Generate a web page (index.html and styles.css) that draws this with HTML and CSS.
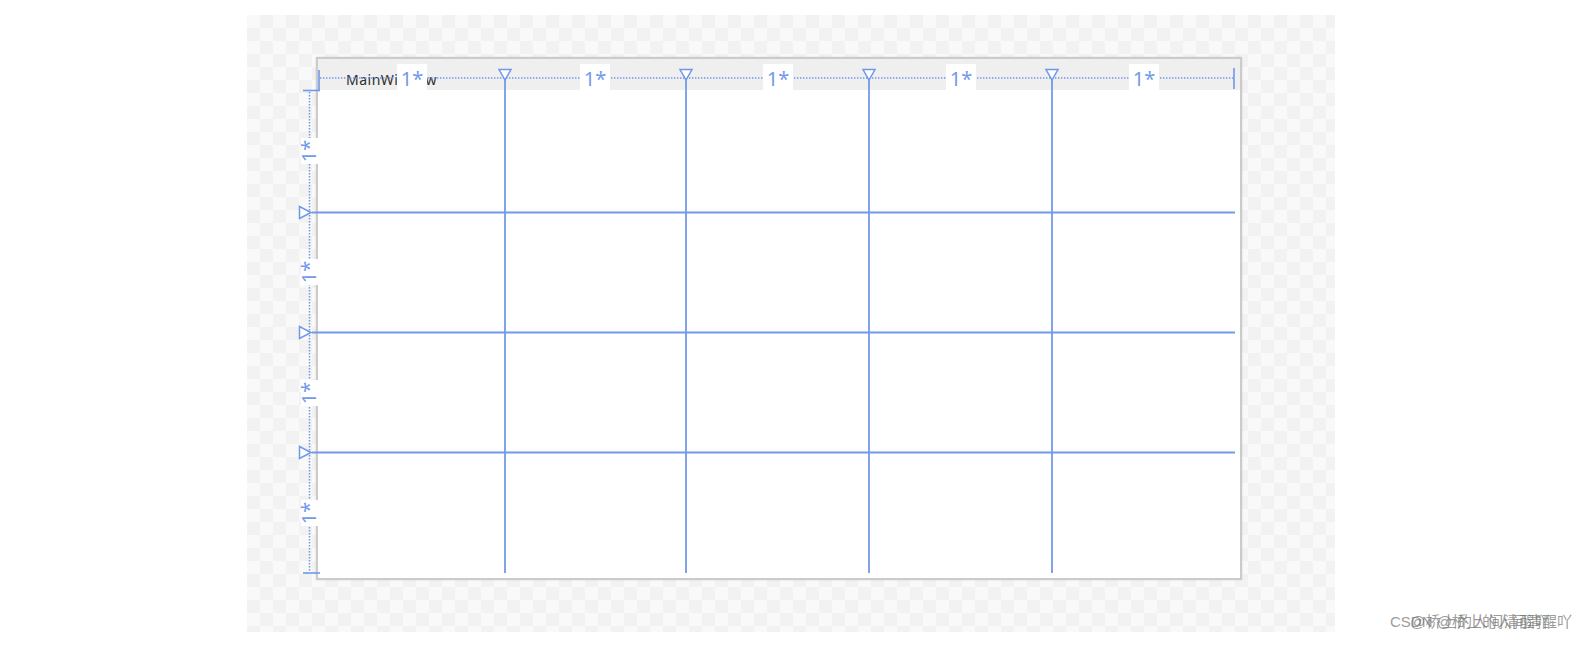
FILE: index.html
```html
<!DOCTYPE html>
<html>
<head>
<meta charset="utf-8">
<title>MainWindow 设计器</title>
<link rel="stylesheet" href="styles.css">
</head>
<body>
<div class="page">
	<div class="canvas">
		<div class="window">
			<div class="titlebar"><span class="title">MainWindow</span></div>
			<div class="client"></div>
		</div>
	</div>

	<!-- grid adorners drawn over the design surface -->
	<svg class="adorners" width="1578" height="648" viewBox="0 0 1578 648">
		<g class="dots">
			<line x1="320" y1="78" x2="1233" y2="78"/>
			<line x1="309.5" y1="92" x2="309.5" y2="572"/>
		</g>
		<g class="ticks">
			<line x1="319" y1="70" x2="319" y2="91"/>
			<line x1="303" y1="90.5" x2="320" y2="90.5"/>
			<line x1="1234" y1="68" x2="1234" y2="89"/>
			<line x1="303" y1="573" x2="320" y2="573"/>
		</g>
		<g class="lines">
			<line x1="505" y1="80" x2="505" y2="573"/>
			<line x1="686" y1="80" x2="686" y2="573"/>
			<line x1="869" y1="80" x2="869" y2="573"/>
			<line x1="1052" y1="80" x2="1052" y2="573"/>
			<line x1="312" y1="212.5" x2="1235" y2="212.5"/>
			<line x1="312" y1="332.5" x2="1235" y2="332.5"/>
			<line x1="312" y1="452.5" x2="1235" y2="452.5"/>
		</g>
		<g class="marks">
			<polygon points="499,69.5 511,69.5 505,80"/>
			<polygon points="680,69.5 692,69.5 686,80"/>
			<polygon points="863,69.5 875,69.5 869,80"/>
			<polygon points="1046,69.5 1058,69.5 1052,80"/>
			<polygon points="299.5,206.5 299.5,218.5 311,212.5"/>
			<polygon points="299.5,326.5 299.5,338.5 311,332.5"/>
			<polygon points="299.5,446.5 299.5,458.5 311,452.5"/>
		</g>
		<g class="labels">
			<rect x="397" y="64" width="30" height="26"/>
			<text x="412" y="86">1*</text>
			<rect x="580" y="64" width="30" height="26"/>
			<text x="595" y="86">1*</text>
			<rect x="763" y="64" width="30" height="26"/>
			<text x="778" y="86">1*</text>
			<rect x="946" y="64" width="30" height="26"/>
			<text x="961" y="86">1*</text>
			<rect x="1129" y="64" width="30" height="26"/>
			<text x="1144" y="86">1*</text>

			<rect x="301" y="138" width="19" height="26"/>
			<text transform="translate(316 151) rotate(-90)">1*</text>
			<rect x="301" y="259" width="19" height="26"/>
			<text transform="translate(316 272) rotate(-90)">1*</text>
			<rect x="301" y="380" width="19" height="26"/>
			<text transform="translate(316 393) rotate(-90)">1*</text>
			<rect x="301" y="500" width="19" height="26"/>
			<text transform="translate(316 513) rotate(-90)">1*</text>
		</g>
	</svg>

	<div class="watermark">
		<span class="wm-a">CSDN @桥上的人间清醒吖</span>
		<span class="wm-b">@桥上的人间清醒吖</span>
	</div>
</div>
</body>
</html>
```

FILE: styles.css
```css
* { margin: 0; padding: 0; box-sizing: border-box; }

body {
	background: #fff;
	font-family: "Noto Sans", "Liberation Sans", sans-serif;
}

.page {
	position: relative;
	width: 1578px;
	height: 648px;
	padding: 15px 0 0 247px;
}

.canvas {
	width: 1088px;
	height: 617px;
	padding: 42px 0 0 69px;
	background-color: #f9f9f9;
	background-image: conic-gradient(#f2f2f2 25%, transparent 0 50%, #f2f2f2 0 75%, transparent 0);
	background-size: 26px 26px;
}

.window {
	display: flex;
	flex-direction: column;
	width: 926px;
	height: 523px;
	border: 2px solid #cbcbcb;
	box-shadow: 0 0 2px rgba(0, 0, 0, 0.12);
	background: #fff;
}

.titlebar {
	height: 31px;
	padding: 9px 0 0 28px;
	background: #efefef;
}

.title {
	font-size: 14px;
	line-height: 14px;
	color: #2e2e2e;
	letter-spacing: 0.5px;
}

.client {
	flex: 1;
	background: #fff;
}

.adorners {
	position: absolute;
	top: 0;
	left: 0;
	pointer-events: none;
}

.dots line {
	stroke: #6f97ea;
	stroke-width: 1.5;
	stroke-dasharray: 1.4 1.6;
}

.ticks line {
	stroke: #6f97ea;
	stroke-width: 1.6;
}

.lines line {
	stroke: #7399ea;
	stroke-width: 1.8;
}

.marks polygon {
	fill: #fff;
	stroke: #6f97ea;
	stroke-width: 1.5;
}

.labels rect {
	fill: #fff;
}

.labels text {
	font-family: "Noto Sans", "Liberation Sans", sans-serif;
	font-size: 20px;
	fill: #7399ea;
	text-anchor: middle;
}

.watermark {
	position: absolute;
	top: 609px;
	left: 1390px;
	width: 186px;
	height: 26px;
	font-family: "Liberation Sans", "Noto Sans CJK SC", sans-serif;
	font-size: 15px;
	line-height: 26px;
	color: rgba(110, 110, 110, 0.7);
	white-space: nowrap;
}

.wm-a,
.wm-b {
	position: absolute;
	top: 0;
}

.wm-a { left: 0; }
.wm-b { left: 20px; letter-spacing: 0.6px; }
```
